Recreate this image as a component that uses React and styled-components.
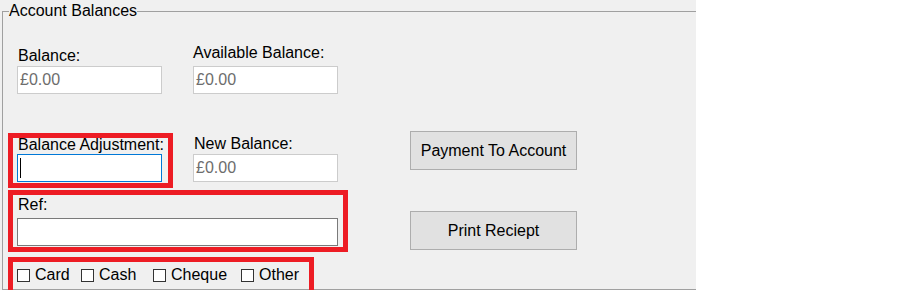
import React from "react";
import styled, { createGlobalStyle } from "styled-components";

const Global = createGlobalStyle`
  html, body { margin: 0; padding: 0; background: #ffffff; }
  #root { width: 921px; height: 290px; }
  * { box-sizing: border-box; }
`;

const Panel = styled.div`
  width: 696px;
  height: 290px;
  overflow: hidden;
  background: #f0f0f0;
  padding: 2px 0 0 2px;
  font-family: "Liberation Sans", Arial, sans-serif;
  font-size: 16px;
  color: #000;
`;

const GroupHeader = styled.div`
  display: flex;
  height: 18px;
`;

const Corner = styled.div`
  width: 7px;
  margin-top: 9px;
  border-top: 1px solid #a0a0a0;
  border-left: 1px solid #a0a0a0;
`;

const Title = styled.div`
  line-height: 18px;
  white-space: nowrap;
`;

const Rule = styled.div`
  flex: 1;
  margin-top: 9px;
  border-top: 1px solid #a0a0a0;
`;

const GroupBody = styled.div`
  display: flex;
  height: 270px;
  border-left: 1px solid #a0a0a0;
  border-bottom: 1px solid #a0a0a0;
`;

const LeftColumn = styled.div`
  display: flex;
  flex-direction: column;
  align-items: flex-start;
  padding-left: 5px;
`;

const FieldRow = styled.div`
  display: flex;
  align-items: ${(p) => p.$align || "flex-start"};
  gap: ${(p) => p.$gap}px;
  margin-top: ${(p) => p.$top}px;
  padding-left: ${(p) => p.$indent || 0}px;
`;

const Field = styled.div`
  display: flex;
  flex-direction: column;
  width: ${(p) => p.$width}px;
  margin-top: ${(p) => p.$top || 0}px;
`;

const Label = styled.div`
  line-height: 14px;
  white-space: nowrap;
  margin-bottom: ${(p) => p.$gap}px;
  padding-left: ${(p) => p.$indent || 0}px;
`;

const TextBox = styled.div`
  display: flex;
  align-items: center;
  width: 100%;
  height: 28px;
  padding-left: 2px;
  background: #ffffff;
  border: 1px solid ${(p) => p.$border};
  color: #6d6d6d;
  white-space: nowrap;
`;

const Caret = styled.span`
  width: 1px;
  height: 20px;
  background: #000;
`;

const RedBox = styled.div`
  border: 5px solid #ed1c24;
  padding: ${(p) => p.$pad};
  margin-top: ${(p) => p.$top || 0}px;
`;

const CheckRow = styled.div`
  display: flex;
  align-items: center;
  height: 14px;
`;

const CheckItem = styled.label`
  display: flex;
  align-items: center;
  gap: 5px;
  width: ${(p) => (p.$width ? `${p.$width}px` : "auto")};
  line-height: 14px;
  white-space: nowrap;
`;

const CheckBox = styled.span`
  width: 13px;
  height: 13px;
  border: 1px solid #333333;
  background: #ffffff;
`;

const ButtonColumn = styled.div`
  display: flex;
  flex-direction: column;
  gap: 41px;
  margin-left: 62px;
  padding-top: 111px;
`;

const Button = styled.button`
  width: 167px;
  height: 39px;
  padding: 0;
  background: #e1e1e1;
  border: 1px solid #adadad;
  font-family: "Liberation Sans", Arial, sans-serif;
  font-size: 16px;
  color: #000;
`;

const DISABLED = "#cccccc";

export default function App() {
  return (
    <>
      <Global />
      <Panel>
        <GroupHeader>
          <Corner />
          <Title>Account Balances</Title>
          <Rule />
        </GroupHeader>
        <GroupBody>
          <LeftColumn>
            <FieldRow $align="flex-end" $gap={31} $top={26} $indent={9}>
              <Field $width={145}>
                <Label $gap={3} $indent={1}>Balance:</Label>
                <TextBox $border={DISABLED}>£0.00</TextBox>
              </Field>
              <Field $width={145}>
                <Label $gap={6}>Available Balance:</Label>
                <TextBox $border={DISABLED}>£0.00</TextBox>
              </Field>
            </FieldRow>

            <FieldRow $gap={20} $top={39}>
              <RedBox $pad="0 6px 1px 4px">
                <Field $width={145}>
                  <Label $gap={2} $indent={1}>Balance Adjustment:</Label>
                  <TextBox $border="#0078d7">
                    <Caret />
                  </TextBox>
                </Field>
              </RedBox>
              <Field $width={145} $top={4}>
                <Label $gap={3} $indent={1}>New Balance:</Label>
                <TextBox $border={DISABLED}>£0.00</TextBox>
              </Field>
            </FieldRow>

            <RedBox $pad="3px 5px 1px 4px" $top={2}>
              <Field $width={321}>
                <Label $gap={6} $indent={1}>Ref:</Label>
                <TextBox $border="#7a7a7a" />
              </Field>
            </RedBox>

            <RedBox $pad="6px 10px 20px 4px" $top={5}>
              <CheckRow>
                <CheckItem $width={64}>
                  <CheckBox />
                  Card
                </CheckItem>
                <CheckItem $width={72}>
                  <CheckBox />
                  Cash
                </CheckItem>
                <CheckItem $width={88}>
                  <CheckBox />
                  Cheque
                </CheckItem>
                <CheckItem>
                  <CheckBox />
                  Other
                </CheckItem>
              </CheckRow>
            </RedBox>
          </LeftColumn>

          <ButtonColumn>
            <Button>Payment To Account</Button>
            <Button>Print Reciept</Button>
          </ButtonColumn>
        </GroupBody>
      </Panel>
    </>
  );
}
